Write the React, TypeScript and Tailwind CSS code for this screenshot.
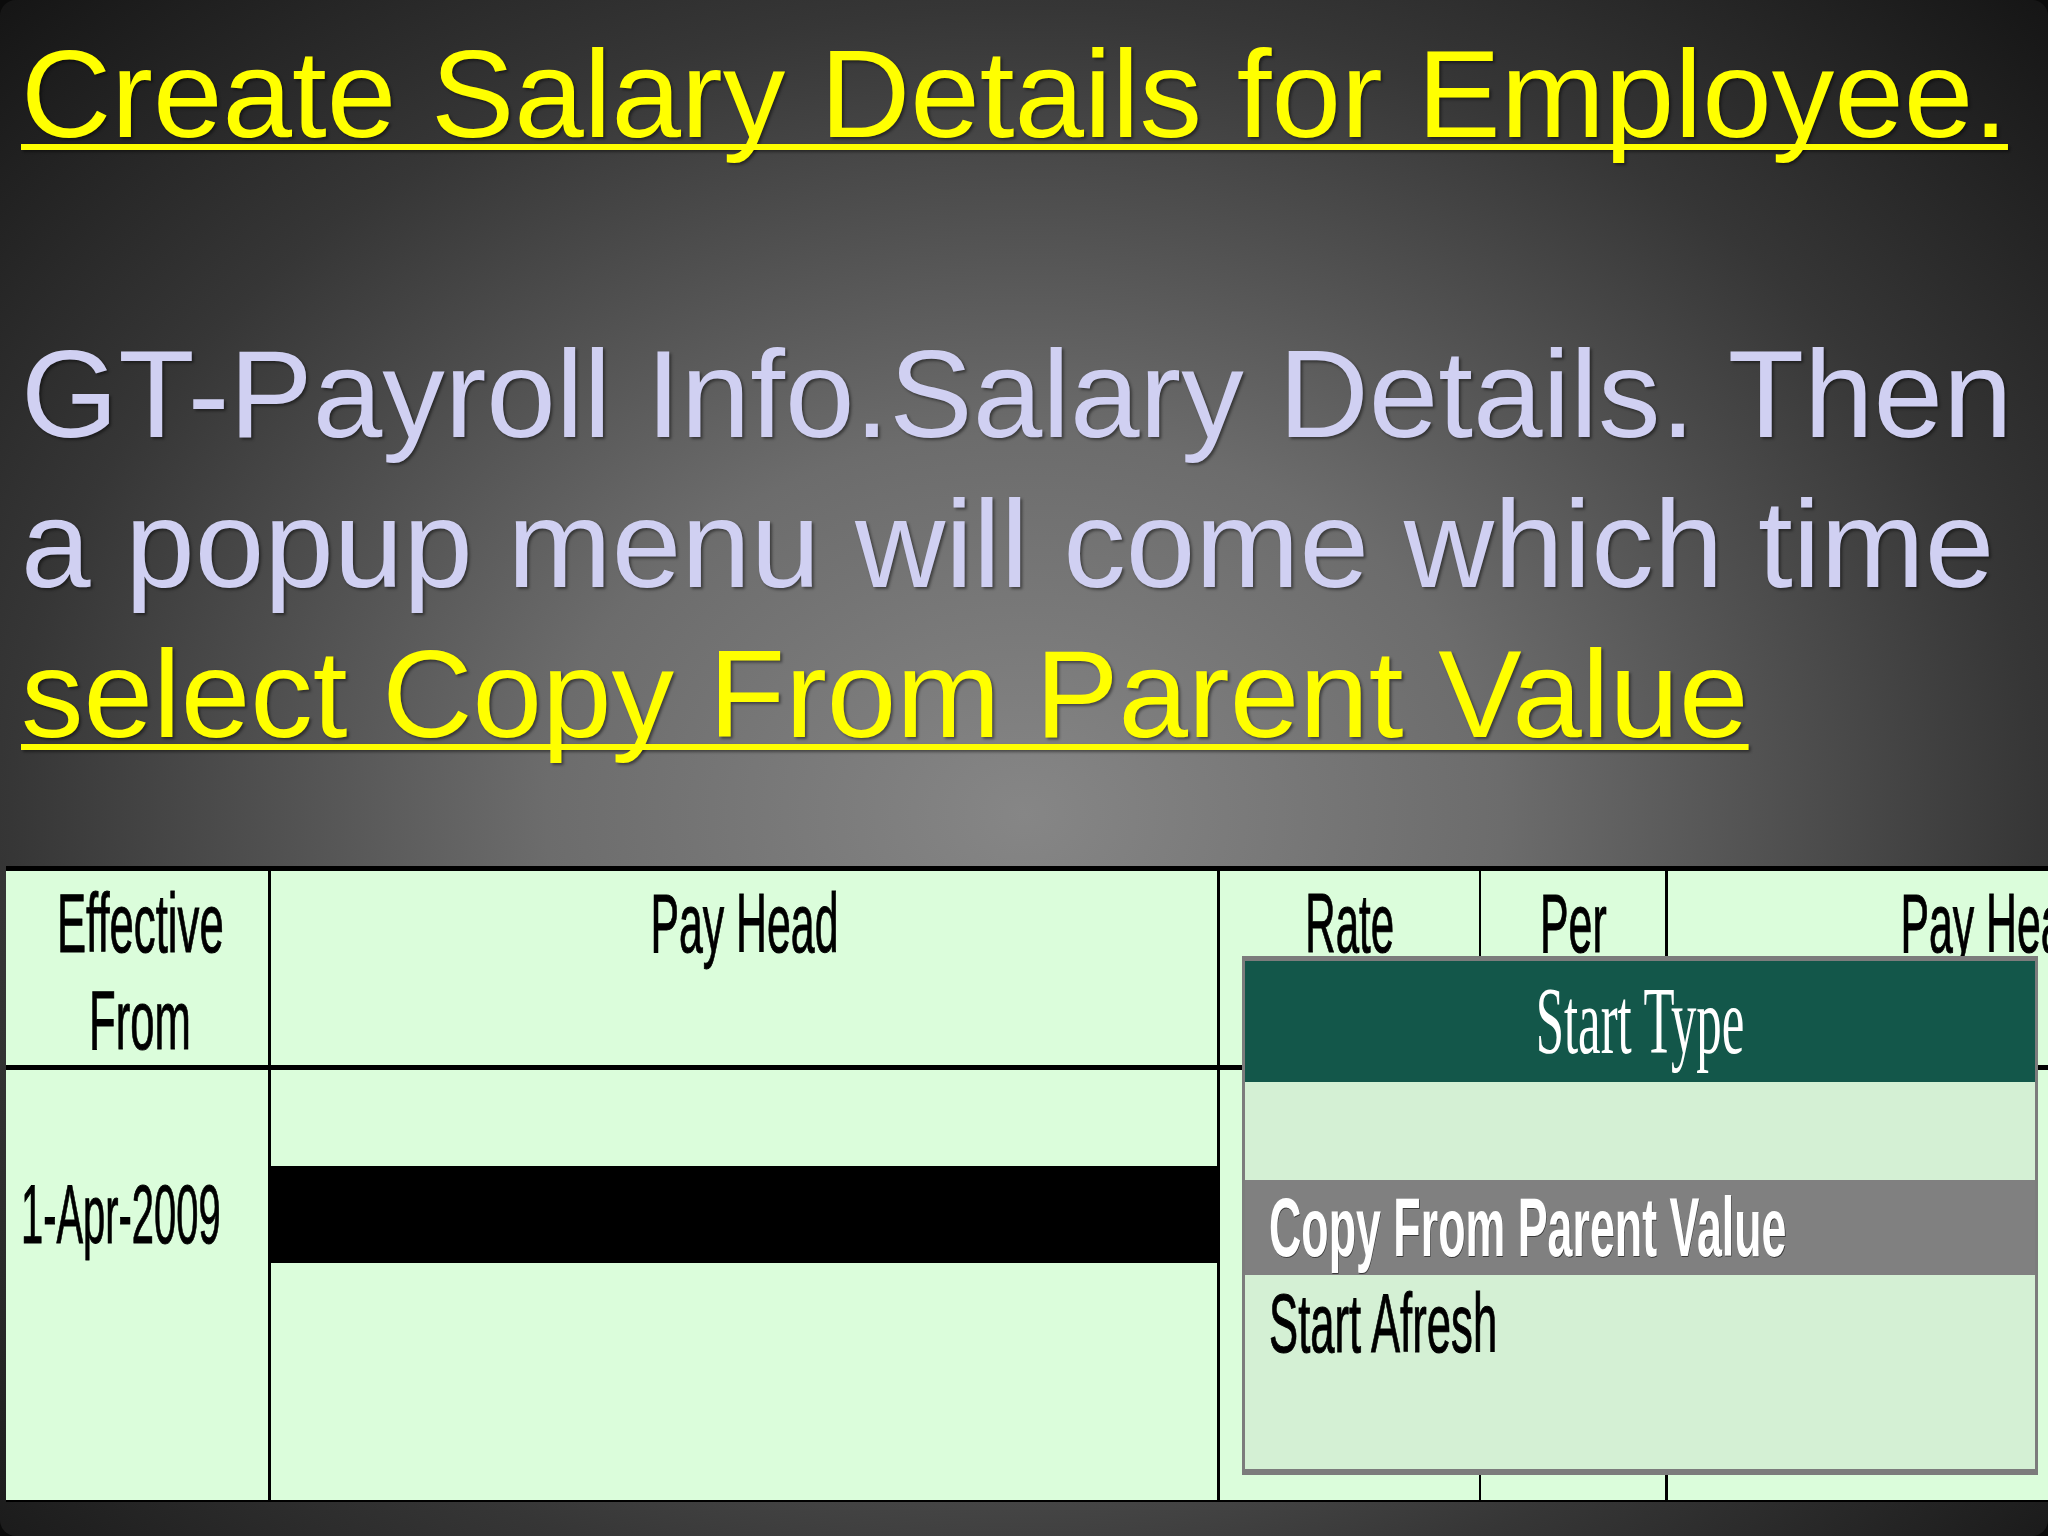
export default function App() {
  const narrow = "inline-block shrink-0 whitespace-nowrap text-[84px] leading-[97px] text-black font-['Liberation_Sans',Arial,sans-serif] [-webkit-text-stroke:1px_#000]";

  return (
    <div className="relative w-[2048px] h-[1536px] overflow-hidden bg-[#0b0b0b]">
      <div className="flex flex-col h-full rounded-[16px] overflow-hidden bg-[radial-gradient(ellipse_farthest-corner_at_50%_53%,#868686_0%,#6c6c6c_33%,#363636_70%,#151515_100%)]">
        {/* slide text */}
        <div className="pt-[19px] pl-[21px] text-[125px] leading-[150px] whitespace-nowrap font-['Liberation_Sans',Arial,sans-serif] [text-shadow:2px_2px_3px_rgba(0,0,0,0.45)]">
          <p className="text-[#ffff00] underline decoration-[6px] underline-offset-[7px] [text-decoration-skip-ink:none]">
            Create Salary Details for Employee.
          </p>
          <p className="h-[150px]" />
          <p className="text-[#d0d0f2]">GT-Payroll Info.Salary Details. Then</p>
          <p className="text-[#d0d0f2]">a popup menu will come which time</p>
          <p className="text-[#ffff00] underline decoration-[6px] underline-offset-[7px] [text-decoration-skip-ink:none]">
            select Copy From Parent Value
          </p>
        </div>

        {/* salary details grid */}
        <div className="relative mt-[97px] ml-[6px] flex w-[2314px] border-t-[5px] border-b-[2px] border-black bg-[#dbfddb]">
          <div className="w-[265px] shrink-0 border-r-[3px] border-black">
            <div className="h-[199px] pt-[4px] pl-[6px] flex flex-col items-center border-b-[5px] border-black">
              <span className={`${narrow} origin-center scale-x-[0.52]`}>Effective</span>
              <span className={`${narrow} origin-center scale-x-[0.52]`}>From</span>
            </div>
            <div className="h-[430px] pt-[96px] pl-[15px]">
              <span className={`${narrow} origin-left scale-x-[0.475]`}>1-Apr-2009</span>
            </div>
          </div>

          <div className="w-[949px] shrink-0 border-r-[3px] border-black">
            <div className="h-[199px] pt-[4px] flex justify-center border-b-[5px] border-black">
              <span className={`${narrow} origin-center scale-x-[0.51]`}>Pay Head</span>
            </div>
            <div className="h-[430px] pt-[96px]">
              <div className="h-[97px] bg-black" />
            </div>
          </div>

          <div className="w-[261px] shrink-0 border-r-[2px] border-black">
            <div className="h-[199px] pt-[4px] flex justify-center border-b-[5px] border-black">
              <span className={`${narrow} origin-center scale-x-[0.5]`}>Rate</span>
            </div>
            <div className="h-[430px]" />
          </div>

          <div className="w-[187px] shrink-0 border-r-[3px] border-black">
            <div className="h-[199px] pt-[4px] flex justify-center border-b-[5px] border-black">
              <span className={`${narrow} origin-center scale-x-[0.51]`}>Per</span>
            </div>
            <div className="h-[430px]" />
          </div>

          <div className="w-[652px] shrink-0">
            <div className="h-[199px] pt-[4px] flex justify-center border-b-[5px] border-black">
              <span className={`${narrow} origin-center scale-x-[0.51]`}>Pay Head</span>
            </div>
            <div className="h-[430px]" />
          </div>

          {/* Start Type popup */}
          <div className="absolute left-[1236px] top-[85px] w-[796px] h-[519px] flex flex-col border-x-[3px] border-t-[5px] border-b-[6px] border-[#7c7c7c] bg-[#d4f0d4]">
            <div className="h-[121px] flex justify-center bg-[#13574a]">
              <span className="inline-block shrink-0 whitespace-nowrap origin-center scale-x-[0.535] text-[95px] leading-[121px] text-white font-['Liberation_Serif','Times_New_Roman',serif]">
                Start Type
              </span>
            </div>
            <div className="h-[98px]" />
            <div className="h-[95px] pl-[24px] bg-[#808080]">
              <span className="inline-block whitespace-nowrap origin-left scale-x-[0.533] text-[84px] leading-[95px] font-bold text-white font-['Liberation_Sans',Arial,sans-serif] [text-shadow:1px_1px_0_rgba(0,0,0,0.55)]">
                Copy From Parent Value
              </span>
            </div>
            <div className="h-[97px] pl-[24px]">
              <span className={`${narrow} origin-left scale-x-[0.52]`}>Start Afresh</span>
            </div>
            <div className="flex-1" />
          </div>
        </div>
      </div>
    </div>
  );
}
